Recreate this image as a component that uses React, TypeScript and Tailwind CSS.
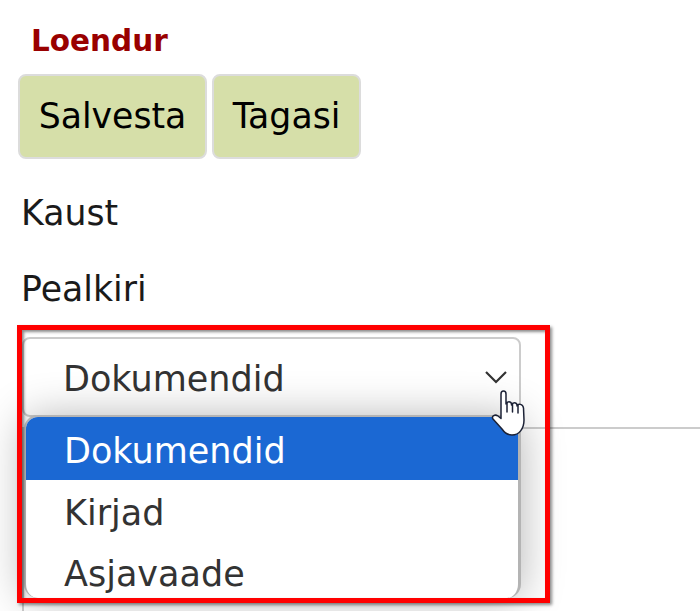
const font = "font-['DejaVu_Sans',sans-serif]"

const HandCursor = () => (
  <svg viewBox="0 0 36 48" className="absolute right-[-5px] top-[52px] w-[36px] h-[48px] z-30">
    <path
      d="M11 5c0-4 5-4 5 0v10c1-3 5-3 5.5 0v1c1-3 5-3 5.5 0v1c1-3 6-2 6.5 2l.5 12c0 9-5 15-12 15-5 0-8-3-10-6l-9-10c-2-3 2-5 5-3l3 2.5z"
      fill="#fff"
      stroke="#1c2236"
      strokeWidth="1.5"
      strokeLinejoin="round"
    />
    <path d="M17 14v9M22.5 15v8M28 16v8" stroke="#1c2236" strokeWidth="1.5" fill="none" strokeLinecap="round" />
  </svg>
)

export default function App() {
  return (
    <div className={`w-[700px] h-[611px] overflow-hidden bg-white ${font}`}>
      {/* Form */}
      <div className="pt-[21px] pl-[18px] flex flex-col">
        <h1 className="pl-[13px] text-[29.5px] leading-[40px] font-bold text-[#990000]">Loendur</h1>
        <div className="mt-[13px] flex gap-[5px]">
          <button className="h-[85px] w-[189px] rounded-[8px] border-2 border-[#dcdcdc] bg-[#d6dfa9] text-[34.7px] text-black">
            Salvesta
          </button>
          <button className="h-[85px] w-[149px] rounded-[8px] border-2 border-[#dcdcdc] bg-[#d6dfa9] text-[34.7px] text-black">
            Tagasi
          </button>
        </div>
        <div className="pl-[3px] mt-[31px] text-[34.7px] leading-[46px] text-[#1a1a1a]">Kaust</div>
        <div className="pl-[3px] mt-[30px] text-[34.7px] leading-[46px] text-[#1a1a1a]">Pealkiri</div>

        {/* Select with its open list */}
        <div className="relative mt-[25px] ml-[4px] w-[499px]">
          <div className="h-[80px] rounded-[8px] border-2 border-[#cccccc] bg-white flex items-center justify-between pl-[39px] pr-[10px] text-[35px] text-[#333333]">
            <span className="pt-[4px]">Dokumendid</span>
            <svg viewBox="0 0 24 14" className="w-[24px] h-[14px] mr-[1px]">
              <path d="M2 2l10 10L22 2" stroke="#333" strokeWidth="2.2" fill="none" />
            </svg>
          </div>

          <div className="absolute left-[2px] top-[78px] w-[497px] h-[183px] overflow-hidden rounded-t-[14px] rounded-b-[14px] border-[3px] border-b-0 border-l-2 border-t-2 border-[#b4b4b4] bg-white text-[35px] text-[#333333] shadow-[0_2px_44px_rgba(0,0,0,0.3)] z-10">
            <div className="h-[63px] bg-[#1b68d3] text-white pl-[38px] leading-[68px]">Dokumendid</div>
            <div className="h-[62px] pl-[38px] leading-[66px]">Kirjad</div>
            <div className="h-[61px] pl-[38px] leading-[64px]">Asjavaade</div>
          </div>

          {/* Red highlight */}
          <div className="absolute left-[-5px] top-[-12px] w-[533px] h-[278px] border-[5px] border-[#ff0000] shadow-[2px_2px_3px_rgba(0,0,0,0.45),inset_2px_2px_3px_rgba(0,0,0,0.45)] z-20" />

          <HandCursor />
        </div>

        {/* Input behind the open list */}
        <div className="mt-[10px] ml-[4px] w-[700px] h-[200px] border-l-2 border-t-2 border-[#cccccc]" />
      </div>
    </div>
  )
}
